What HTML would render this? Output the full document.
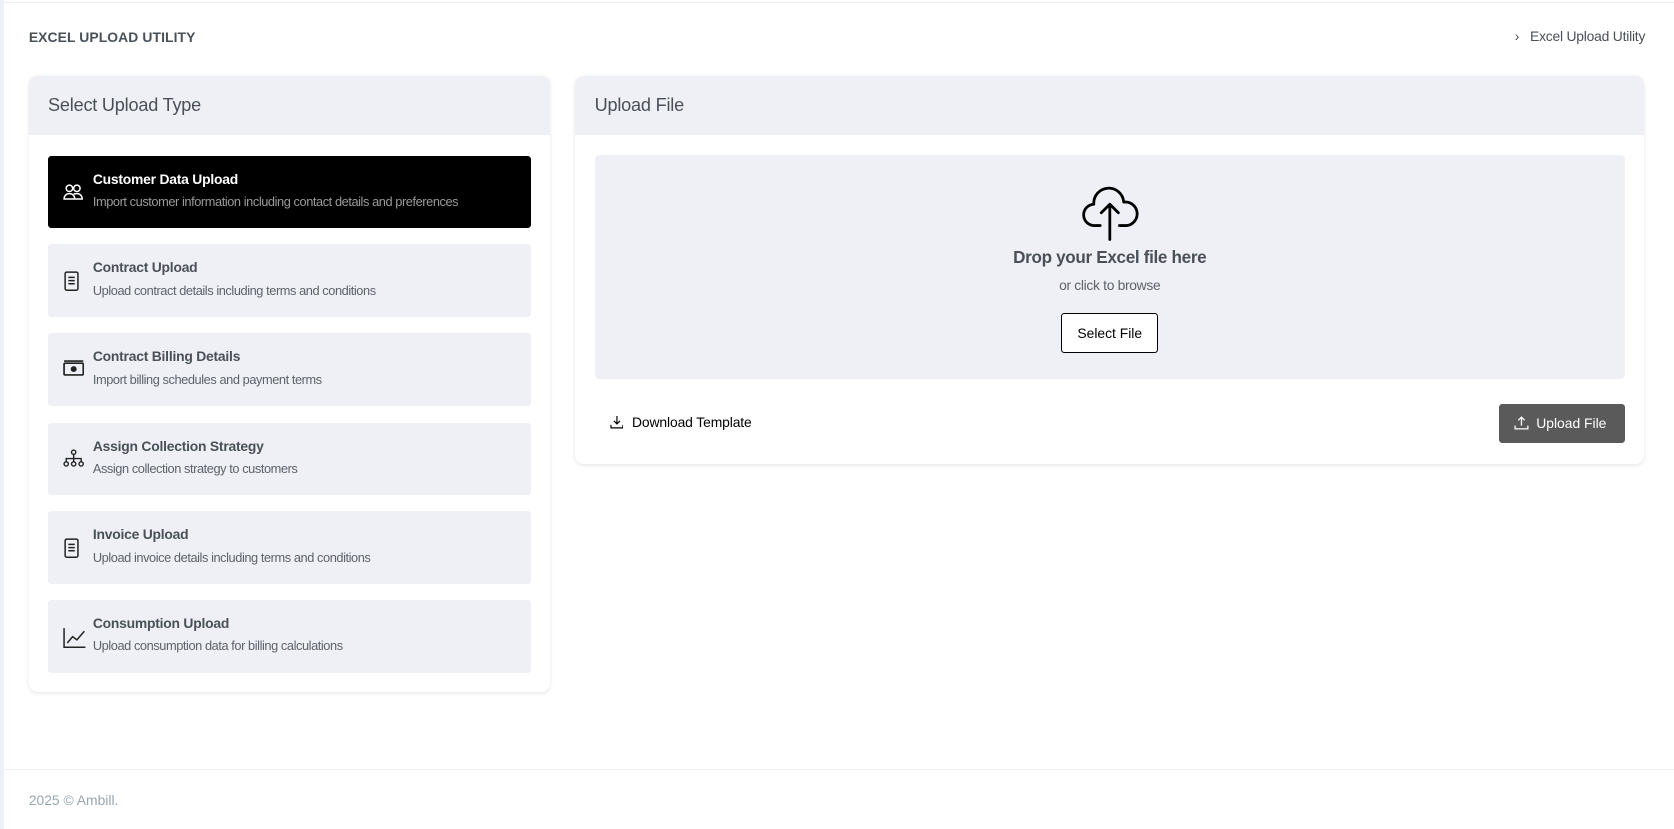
<!DOCTYPE html>
<html><head><meta charset="utf-8"><style>
*{box-sizing:border-box;margin:0;padding:0}
html,body{width:1674px;height:829px;overflow:hidden;background:#fff}
#w{zoom:1.0676;width:1568px;height:777px;position:relative;font-family:"Liberation Sans",sans-serif;color:#495057}
.side{position:absolute;left:0;top:0;width:4px;height:777px;background:#eef0f7}
.topl{position:absolute;left:4px;top:2px;right:0;height:1px;background:#eceef3}
.ttl{position:absolute;left:27px;top:27px;font-size:13px;font-weight:bold;color:#495057;letter-spacing:0.1px}
.bc{position:absolute;right:27px;top:26px;font-size:13px;color:#495057;letter-spacing:-0.2px}
.card{position:absolute;background:#fff;border-radius:8px;box-shadow:0 1px 4px rgba(0,0,0,.1);overflow:hidden}
.ch{height:55px;background:#eff0f5;padding:18px 18px;font-size:17px;color:#495057;letter-spacing:-0.2px}
.it{position:absolute;left:18px;width:452px;height:68px;background:#eff0f5;border-radius:3px}
.it svg{position:absolute;left:14px;top:25px}
.it b{position:absolute;left:42px;top:14px;font-size:13px;color:#495057;letter-spacing:-0.2px}
.it span{position:absolute;left:42px;top:36px;font-size:12px;color:#5c636a;letter-spacing:-0.4px}
.it.sel{background:#000}.it.sel b{color:#fff}.it.sel span{color:#9a9a9a}
.foot{position:absolute;left:4px;right:0;top:720px;border-top:1px solid #eef0f4;height:57px}
.foot div{position:absolute;left:23px;top:21px;font-size:13px;color:#98a6ad}
</style></head><body><div id="w">
<div class="side"></div><div class="topl"></div>
<div class="ttl">EXCEL UPLOAD UTILITY</div>
<div class="bc">›&nbsp;&nbsp;&nbsp;Excel Upload Utility</div>

<div class="card" style="left:27px;top:71px;width:488px;height:577px">
<div class="ch">Select Upload Type</div>
<div class="it sel" style="top:75px"><svg width="20" height="18" viewBox="0 0 20 18" fill="none" stroke="#fff" stroke-width="1.4"><circle cx="6" cy="5" r="3"/><circle cx="13" cy="5" r="3"/><path d="M1 15c0-3 2-5 5-5s5 2 5 5zM10 10.5c1-.5 2-.5 3-.5 3 0 5 2 5 5h-7"/></svg><b>Customer Data Upload</b><span>Import customer information including contact details and preferences</span></div>
<div class="it" style="top:158px"><svg width="16" height="20" viewBox="0 0 16 20" fill="none" stroke="#222" stroke-width="1.4"><rect x="2" y="1" width="12" height="17" rx="1.5"/><path d="M5 6h6M5 9h6M5 12h6"/></svg><b>Contract Upload</b><span>Upload contract details including terms and conditions</span></div>
<div class="it" style="top:241px"><svg width="20" height="16" viewBox="0 0 20 16" fill="none" stroke="#222" stroke-width="1.6"><rect x="1" y="3" width="18" height="11" rx="1"/><circle cx="10" cy="8.5" r="2" fill="#222"/><path d="M1 1h18"/></svg><b>Contract Billing Details</b><span>Import billing schedules and payment terms</span></div>
<div class="it" style="top:325px"><svg width="20" height="18" viewBox="0 0 20 18" fill="none" stroke="#222" stroke-width="1.3"><circle cx="10" cy="3" r="2"/><circle cx="3" cy="14" r="2"/><circle cx="10" cy="14" r="2"/><circle cx="17" cy="14" r="2"/><path d="M10 5v7M3 12V9h14v3"/></svg><b>Assign Collection Strategy</b><span>Assign collection strategy to customers</span></div>
<div class="it" style="top:408px"><svg width="16" height="20" viewBox="0 0 16 20" fill="none" stroke="#222" stroke-width="1.4"><rect x="2" y="1" width="12" height="17" rx="1.5"/><path d="M5 6h6M5 9h6M5 12h6"/></svg><b>Invoice Upload</b><span>Upload invoice details including terms and conditions</span></div>
<div class="it" style="top:491px"><svg width="22" height="20" viewBox="0 0 22 20" fill="none" stroke="#222" stroke-width="1.4"><path d="M1 1v18h20M4 15l5-6 4 3 7-8"/></svg><b>Consumption Upload</b><span>Upload consumption data for billing calculations</span></div>
</div>

<div class="card" style="left:539px;top:71px;width:1001px;height:364px">
<div class="ch">Upload File</div>
<div style="position:absolute;left:18px;top:74px;width:965px;height:210px;background:#eff0f5;border-radius:4px">
<svg style="position:absolute;left:456px;top:28px" width="54" height="54" viewBox="0 0 54 54" fill="none" stroke="#000" stroke-width="2.6" stroke-linecap="round" stroke-linejoin="round"><path d="M18 38H13a10 10 0 0 1-1-20 14 14 0 0 1 28-2 10 10 0 0 1 3 22h-7"/><path d="M27 51V18M19 26l8-8 8 8"/></svg>
<div style="position:absolute;left:0;right:0;top:87px;text-align:center;font-size:16px;font-weight:bold;color:#495057;letter-spacing:-0.3px">Drop your Excel file here</div>
<div style="position:absolute;left:0;right:0;top:114px;text-align:center;font-size:13px;color:#5c636a;letter-spacing:-0.3px">or click to browse</div>
<div style="position:absolute;left:437px;top:148px;width:91px;height:38px;border:1px solid #000;border-radius:3px;background:#fff;font-size:13px;color:#000;text-align:center;line-height:36px">Select File</div>
</div>
<svg style="position:absolute;left:32px;top:318px" width="13" height="13" viewBox="0 0 14 14" fill="none" stroke="#000" stroke-width="1.2"><path d="M7 1v8M4 6l3 3 3-3M1 10v3h12v-3"/></svg>
<div style="position:absolute;left:53px;top:317px;font-size:13px;color:#000;letter-spacing:-0.1px">Download Template</div>
<div style="position:absolute;left:865px;top:307px;width:118px;height:37px;background:#5a5a5a;border-radius:3px;color:#fff;font-size:13px;line-height:37px;padding-left:35px">Upload File</div>
<svg style="position:absolute;left:879px;top:318px" width="14" height="14" viewBox="0 0 14 14" fill="none" stroke="#fff" stroke-width="1.2"><path d="M7 10V2M4 5l3-3 3 3M1 10v3h12v-3"/></svg>
</div>

<div class="foot"><div>2025 © Ambill.</div></div>
</div></body></html>
